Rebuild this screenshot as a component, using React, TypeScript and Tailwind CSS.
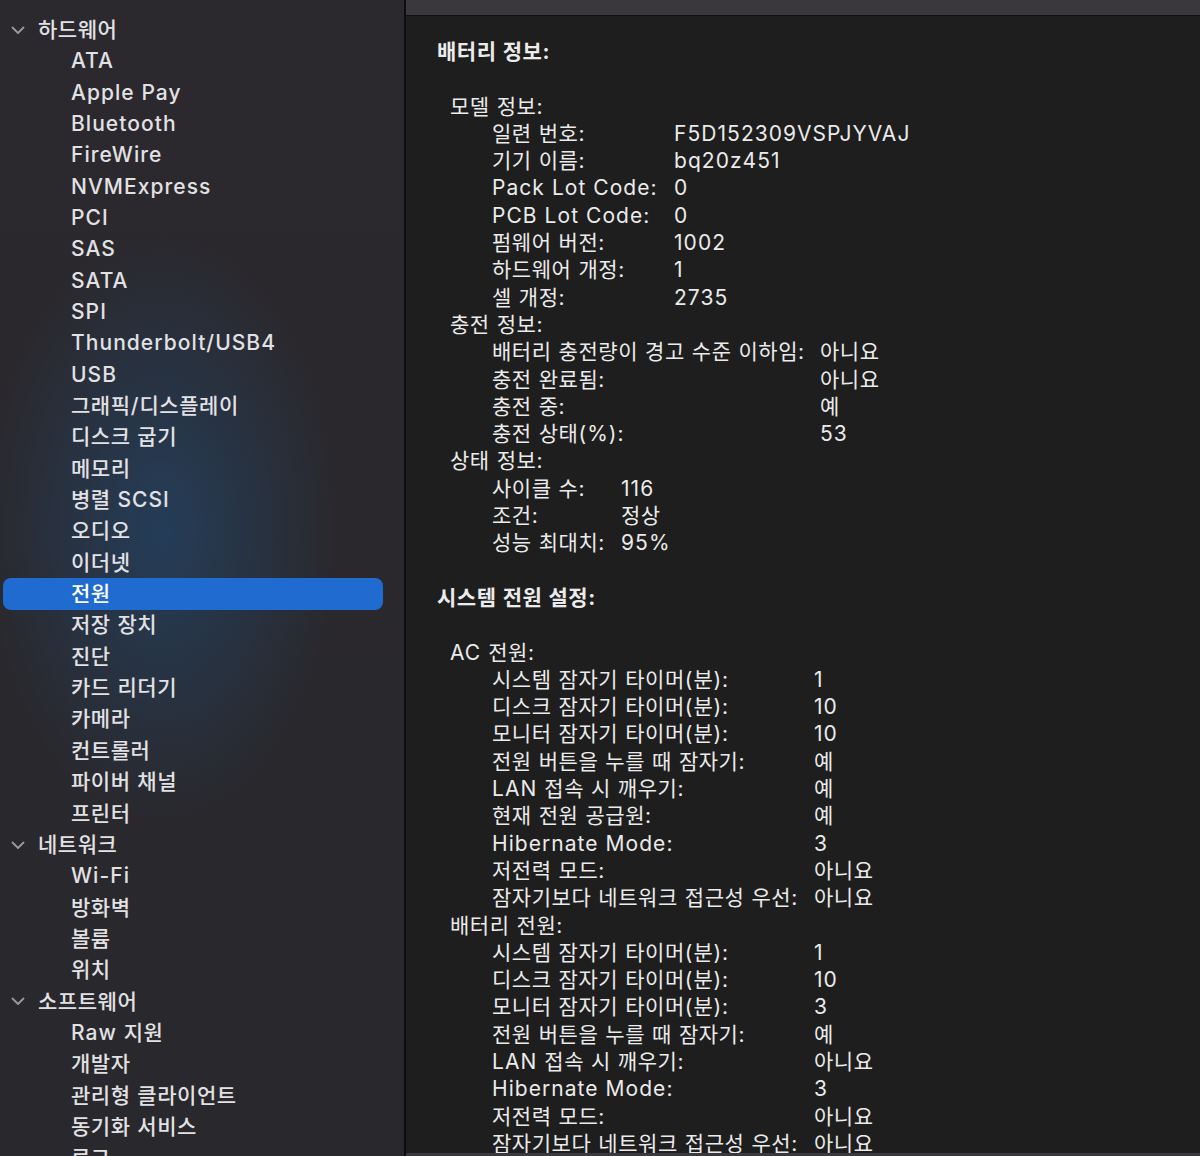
import React from "react";

type SideItem = { label: string; header?: boolean; selected?: boolean };

const sideItems: SideItem[] = [
  { label: "하드웨어", header: true },
  { label: "ATA" },
  { label: "Apple Pay" },
  { label: "Bluetooth" },
  { label: "FireWire" },
  { label: "NVMExpress" },
  { label: "PCI" },
  { label: "SAS" },
  { label: "SATA" },
  { label: "SPI" },
  { label: "Thunderbolt/USB4" },
  { label: "USB" },
  { label: "그래픽/디스플레이" },
  { label: "디스크 굽기" },
  { label: "메모리" },
  { label: "병렬 SCSI" },
  { label: "오디오" },
  { label: "이더넷" },
  { label: "전원", selected: true },
  { label: "저장 장치" },
  { label: "진단" },
  { label: "카드 리더기" },
  { label: "카메라" },
  { label: "컨트롤러" },
  { label: "파이버 채널" },
  { label: "프린터" },
  { label: "네트워크", header: true },
  { label: "Wi-Fi" },
  { label: "방화벽" },
  { label: "볼륨" },
  { label: "위치" },
  { label: "소프트웨어", header: true },
  { label: "Raw 지원" },
  { label: "개발자" },
  { label: "관리형 클라이언트" },
  { label: "동기화 서비스" },
  { label: "로그" },
];

// Split text into Hangul / non-Hangul runs so Latin text gets wider tracking
function T({ text }: { text: string }) {
  const parts = text.split(/([\uAC00-\uD7A3]+)/).filter((p) => p.length > 0);
  return (
    <>
      {parts.map((p, i) =>
        /[\uAC00-\uD7A3]/.test(p) ? (
          <span key={i} className="tracking-[0.55px]">
            {p}
          </span>
        ) : (
          <span key={i} className="tracking-[1.05px]">
            {p}
          </span>
        )
      )}
    </>
  );
}

function Chevron() {
  return (
    <svg width="14" height="10" viewBox="0 0 14 10" className="shrink-0">
      <polyline
        points="1.5,2.5 7,8 12.5,2.5"
        fill="none"
        stroke="#9b999e"
        strokeWidth="1.8"
        strokeLinecap="round"
        strokeLinejoin="round"
      />
    </svg>
  );
}

function Sidebar() {
  return (
    <aside className="w-[404px] shrink-0 h-full overflow-hidden pt-[14px] bg-[radial-gradient(ellipse_58%_34%_at_40%_46%,rgba(32,78,124,0.55),transparent_75%),linear-gradient(180deg,#2b292e_0%,#29282c_100%)]">
      {sideItems.map((it, i) =>
        it.header ? (
          <div key={i} className="h-[31.35px] flex items-center">
            <div className="w-[38px] pl-[11px] flex items-center">
              <Chevron />
            </div>
            <span className="text-[21px] text-[#e2e1e4] font-medium">
              <T text={it.label} />
            </span>
          </div>
        ) : it.selected ? (
          <div key={i} className="h-[31.35px] flex items-center ml-[3px] mr-[21px] rounded-[8px] bg-[#1f6bd0]">
            <span className="pl-[68px] text-[21px] text-white font-medium">
              <T text={it.label} />
            </span>
          </div>
        ) : (
          <div key={i} className="h-[31.35px] flex items-center">
            <span className="pl-[71px] text-[21px] text-[#e2e1e4] font-medium whitespace-nowrap">
              <T text={it.label} />
            </span>
          </div>
        )
      )}
    </aside>
  );
}

type Row = [string, string];

function Group({ title, width, rows }: { title: string; width: number; rows: Row[] }) {
  const wClass =
    width === 182 ? "w-[182px]" : width === 328 ? "w-[328px]" : width === 129 ? "w-[129px]" : "w-[322px]";
  return (
    <div>
      <div className="h-[27.3px] pl-[13px]">
        <T text={title} />
      </div>
      {rows.map(([k, v], i) => (
        <div key={i} className="h-[27.3px] flex pl-[55px] whitespace-nowrap">
          <div className={wClass + " shrink-0"}>
            <T text={k} />
          </div>
          <div>
            <T text={v} />
          </div>
        </div>
      ))}
    </div>
  );
}

function Blank() {
  return <div className="h-[27.3px]" />;
}

function Content() {
  return (
    <div className="flex-1 overflow-hidden pl-[31px] pt-[22px] text-[21px] leading-[27.3px] text-[#ebebeb]">
      <div className="h-[27.3px] font-bold">
        <T text="배터리 정보:" />
      </div>
      <Blank />
      <Group
        title="모델 정보:"
        width={182}
        rows={[
          ["일련 번호:", "F5D152309VSPJYVAJ"],
          ["기기 이름:", "bq20z451"],
          ["Pack Lot Code:", "0"],
          ["PCB Lot Code:", "0"],
          ["펌웨어 버전:", "1002"],
          ["하드웨어 개정:", "1"],
          ["셀 개정:", "2735"],
        ]}
      />
      <Group
        title="충전 정보:"
        width={328}
        rows={[
          ["배터리 충전량이 경고 수준 이하임:", "아니요"],
          ["충전 완료됨:", "아니요"],
          ["충전 중:", "예"],
          ["충전 상태(%):", "53"],
        ]}
      />
      <Group
        title="상태 정보:"
        width={129}
        rows={[
          ["사이클 수:", "116"],
          ["조건:", "정상"],
          ["성능 최대치:", "95%"],
        ]}
      />
      <Blank />
      <div className="h-[27.3px] font-bold">
        <T text="시스템 전원 설정:" />
      </div>
      <Blank />
      <Group
        title="AC 전원:"
        width={322}
        rows={[
          ["시스템 잠자기 타이머(분):", "1"],
          ["디스크 잠자기 타이머(분):", "10"],
          ["모니터 잠자기 타이머(분):", "10"],
          ["전원 버튼을 누를 때 잠자기:", "예"],
          ["LAN 접속 시 깨우기:", "예"],
          ["현재 전원 공급원:", "예"],
          ["Hibernate Mode:", "3"],
          ["저전력 모드:", "아니요"],
          ["잠자기보다 네트워크 접근성 우선:", "아니요"],
        ]}
      />
      <Group
        title="배터리 전원:"
        width={322}
        rows={[
          ["시스템 잠자기 타이머(분):", "1"],
          ["디스크 잠자기 타이머(분):", "10"],
          ["모니터 잠자기 타이머(분):", "3"],
          ["전원 버튼을 누를 때 잠자기:", "예"],
          ["LAN 접속 시 깨우기:", "아니요"],
          ["Hibernate Mode:", "3"],
          ["저전력 모드:", "아니요"],
          ["잠자기보다 네트워크 접근성 우선:", "아니요"],
        ]}
      />
    </div>
  );
}

export default function App() {
  return (
    <div className="flex w-[1200px] h-[1156px] overflow-hidden bg-[#1e1e1e] font-['Inter','Noto_Sans_CJK_KR',sans-serif]">
      <Sidebar />
      <div className="w-[2px] shrink-0 bg-[#0d0d0d]" />
      <main className="flex-1 flex flex-col min-w-0 bg-[#1e1e1e]">
        <div className="h-[15px] shrink-0 bg-[#3a373d] border-b border-[#111111] box-content" />
        <Content />
        <div className="h-[3px] shrink-0 bg-[#3a3a3c]" />
      </main>
    </div>
  );
}
